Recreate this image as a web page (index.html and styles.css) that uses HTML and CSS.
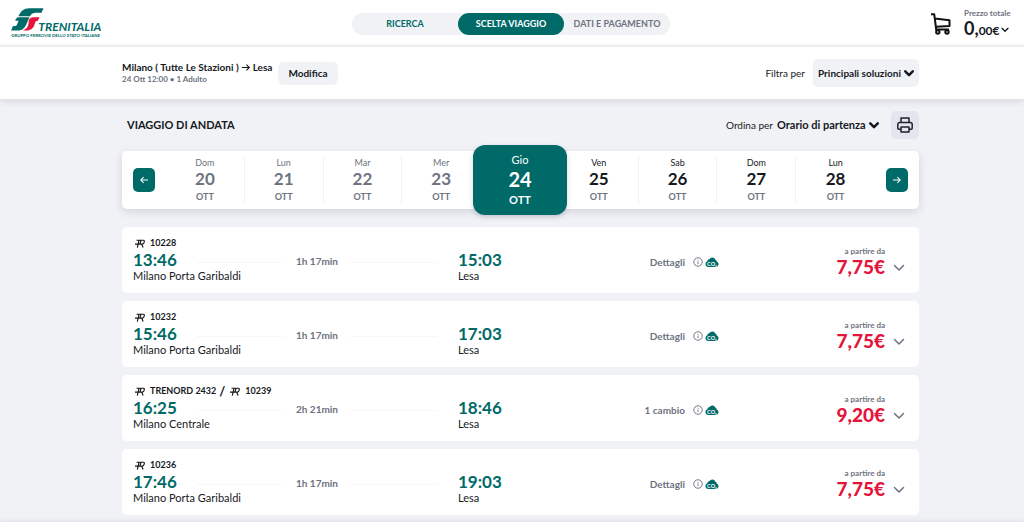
FILE: index.html
```html
<!DOCTYPE html>
<html lang="it">
<head>
<meta charset="utf-8">
<meta name="viewport" content="width=device-width, initial-scale=1">
<title>Trenitalia - Scelta viaggio</title>
<link rel="stylesheet" href="styles.css">
</head>
<body>
<svg class="defs" aria-hidden="true">
  <symbol id="regional" viewBox="0 0 26 22"><path d="M4 2.500H22Q25 2.500 24 7T20 12.500H0M10.500 2.500L6 22M17.500 12.500l3.500 9M15.500 2.500L13 12" fill="none" stroke="currentColor" stroke-width="3"/></symbol>
  <symbol id="chevron" viewBox="0 0 12 8"><path d="M1.500 1.500L6 6l4.500-4.500" fill="none" stroke="currentColor" stroke-linecap="round" stroke-linejoin="round"/></symbol>
  <symbol id="info" viewBox="0 0 20 20"><circle cx="10" cy="10" r="8.500" fill="none" stroke="currentColor" stroke-width="1.900"/><path d="M10 9v5.500M10 5.500v2" stroke="currentColor" stroke-width="1.800"/></symbol>
  <symbol id="co2" viewBox="0 0 28 20"><path d="M6 20a6 6 0 0 1-1.500-11.500A5 5 0 0 1 9 4a6.500 6.500 0 0 1 11.500 1A4.500 4.500 0 0 1 23.500 9 5.700 5.700 0 0 1 22 20z" fill="#006a68"/><text x="14" y="17" text-anchor="middle" class="co2-text">CO₂</text></symbol>
</svg>

<header class="topbar">
  <a class="logo" href="#" aria-label="Trenitalia">
    <svg viewBox="0 0 270 93" width="90" height="31">
      <g transform="scale(1.5)">
        <path d="M15 16.400C20 6 26 .6 36 .6H65L61 9.600H50C43 9.600 40 12 38 16.400z" fill="#006a68"/>
        <path d="M14 18.400H37L31 32C27 41 22 45 14 45H0L4 36H8C10 36 11.200 35 12 33L15.200 25.600H8.400C9.600 21.600 11.200 19.400 14 18.400z" fill="#006a68"/>
        <path d="M57 18.400H45C39.200 18.400 36.600 21 35.600 25L35.200 30C34.400 38 30 43.600 22 45H31C40 45 45 40 47 33C48.600 27.600 49 25.600 54 25.600z" fill="#e4153a"/>
      </g>
      <text x="82" y="68" class="logo-name">TRENITALIA</text>
      <text x="1" y="87" class="logo-group">GRUPPO FERROVIE DELLO STATO ITALIANE</text>
    </svg>
  </a>
  <nav class="steps" aria-label="Fasi">
    <a href="#" class="step step-done">RICERCA</a>
    <a href="#" class="step step-current" aria-current="step">SCELTA VIAGGIO</a>
    <span class="step">DATI E PAGAMENTO</span>
  </nav>
  <div class="cart">
    <svg class="cart-icon" viewBox="0 0 20 22" fill="none" stroke="#111" stroke-width="2" stroke-linejoin="round"><path d="M0 1.200h3.200l2 15.300H18M3.700 5.500L18.500 7.300V13L4.900 13.800"/><circle cx="6.800" cy="19" r="1.700"/><circle cx="16" cy="19" r="1.700"/></svg>
    <button class="total" type="button">
      <span class="total-label">Prezzo totale</span>
      <span class="total-value"><span class="total-int">0,</span>00€<svg class="chev-small"><use href="#chevron"/></svg></span>
    </button>
  </div>
</header>

<section class="summary">
  <div class="route">
    <div class="route-name">Milano ( Tutte Le Stazioni ) <svg class="route-arrow" viewBox="0 0 12 10"><path d="M1 5h9M6.500 1.500L10 5 6.500 8.500" fill="none" stroke="currentColor" stroke-width="1.300"/></svg> Lesa</div>
    <div class="route-info">24 Ott 12:00 • 1 Adulto</div>
  </div>
  <button class="edit" type="button">Modifica</button>
  <div class="filter">
    <label for="filter">Filtra per</label>
    <div class="picker picker-box">
      <select id="filter"><option>Principali soluzioni</option></select>
      <svg class="chev-bold"><use href="#chevron"/></svg>
    </div>
  </div>
</section>

<main class="results">
  <div class="toolbar">
    <h1>VIAGGIO DI ANDATA</h1>
    <div class="sort">
      <label for="sort">Ordina per</label>
      <div class="picker picker-plain">
        <select id="sort"><option>Orario di partenza</option></select>
        <svg class="chev-bold"><use href="#chevron"/></svg>
      </div>
    </div>
    <button class="print" type="button" aria-label="Stampa">
      <svg viewBox="0 0 16 16" width="16" height="16" fill="none" stroke="#1f2329" stroke-width="1.500" stroke-linejoin="round"><path d="M4 5.500V1h8v4.500M4 12.200H1.800a1 1 0 0 1-1-1V7.500a2 2 0 0 1 2-2h10.400a2 2 0 0 1 2 2v3.700a1 1 0 0 1-1 1H12M4 10h8v5H4z"/></svg>
    </button>
  </div>

  <div class="dates">
    <button class="nav" type="button" aria-label="Giorni precedenti"><svg viewBox="0 0 12 10"><path d="M11 5H2M5.500 1.500L2 5l3.500 3.500" fill="none" stroke="#fff" stroke-width="1.300"/></svg></button>
    <div class="days">
      <button type="button" class="day day-past"><span class="dow">Dom</span><b>20</b><span class="month">OTT</span></button>
      <button type="button" class="day day-past"><span class="dow">Lun</span><b>21</b><span class="month">OTT</span></button>
      <button type="button" class="day day-past"><span class="dow">Mar</span><b>22</b><span class="month">OTT</span></button>
      <button type="button" class="day day-past"><span class="dow">Mer</span><b>23</b><span class="month">OTT</span></button>
      <button type="button" class="day day-selected" aria-pressed="true"><span class="dow">Gio</span><b>24</b><span class="month">OTT</span></button>
      <button type="button" class="day"><span class="dow">Ven</span><b>25</b><span class="month">OTT</span></button>
      <button type="button" class="day"><span class="dow">Sab</span><b>26</b><span class="month">OTT</span></button>
      <button type="button" class="day"><span class="dow">Dom</span><b>27</b><span class="month">OTT</span></button>
      <button type="button" class="day"><span class="dow">Lun</span><b>28</b><span class="month">OTT</span></button>
    </div>
    <button class="nav" type="button" aria-label="Giorni successivi"><svg viewBox="0 0 12 10"><path d="M1 5h9M6.500 1.500L10 5 6.500 8.500" fill="none" stroke="#fff" stroke-width="1.300"/></svg></button>
  </div>

  <div class="trips">
    <article class="trip">
      <div class="trains"><svg class="reg"><use href="#regional"/></svg>10228</div>
      <div class="stop"><time>13:46</time><span>Milano Porta Garibaldi</span></div>
      <div class="duration">1h 17min</div>
      <div class="stop"><time>15:03</time><span>Lesa</span></div>
      <button class="details" type="button">Dettagli<svg class="info"><use href="#info"/></svg><svg class="co2"><use href="#co2"/></svg></button>
      <div class="price"><span>a partire da</span><strong>7,75€</strong></div>
      <button class="expand" type="button" aria-label="Espandi"><svg><use href="#chevron"/></svg></button>
    </article>
    <article class="trip">
      <div class="trains"><svg class="reg"><use href="#regional"/></svg>10232</div>
      <div class="stop"><time>15:46</time><span>Milano Porta Garibaldi</span></div>
      <div class="duration">1h 17min</div>
      <div class="stop"><time>17:03</time><span>Lesa</span></div>
      <button class="details" type="button">Dettagli<svg class="info"><use href="#info"/></svg><svg class="co2"><use href="#co2"/></svg></button>
      <div class="price"><span>a partire da</span><strong>7,75€</strong></div>
      <button class="expand" type="button" aria-label="Espandi"><svg><use href="#chevron"/></svg></button>
    </article>
    <article class="trip">
      <div class="trains"><svg class="reg"><use href="#regional"/></svg>TRENORD 2432<span class="slash">/</span><svg class="reg"><use href="#regional"/></svg>10239</div>
      <div class="stop"><time>16:25</time><span>Milano Centrale</span></div>
      <div class="duration">2h 21min</div>
      <div class="stop"><time>18:46</time><span>Lesa</span></div>
      <button class="details" type="button">1 cambio<svg class="info"><use href="#info"/></svg><svg class="co2"><use href="#co2"/></svg></button>
      <div class="price"><span>a partire da</span><strong>9,20€</strong></div>
      <button class="expand" type="button" aria-label="Espandi"><svg><use href="#chevron"/></svg></button>
    </article>
    <article class="trip">
      <div class="trains"><svg class="reg"><use href="#regional"/></svg>10236</div>
      <div class="stop"><time>17:46</time><span>Milano Porta Garibaldi</span></div>
      <div class="duration">1h 17min</div>
      <div class="stop"><time>19:03</time><span>Lesa</span></div>
      <button class="details" type="button">Dettagli<svg class="info"><use href="#info"/></svg><svg class="co2"><use href="#co2"/></svg></button>
      <div class="price"><span>a partire da</span><strong>7,75€</strong></div>
      <button class="expand" type="button" aria-label="Espandi"><svg><use href="#chevron"/></svg></button>
    </article>
  </div>
</main>
<footer class="bottom"></footer>
</body>
</html>
```
FILE: styles.css
```css
* { box-sizing: border-box; }
body {
  display: flex;
  flex-direction: column;
  min-height: 100vh;
  margin: 0;
  background: #f1f2f6;
  color: #16191d;
  font-family: Lato, sans-serif;
  font-size: 11px;
  line-height: 14px;
}
button, select {
  font: inherit;
  color: inherit;
  border: 0;
  padding: 0;
  margin: 0;
  background: none;
}
a { color: inherit; text-decoration: none; }
svg { display: block; flex: none; }
.defs { position: absolute; width: 0; height: 0; }

.topbar {
  display: grid;
  grid-template-columns: 1fr 318px 1fr;
  align-items: center;
  height: 47px;
  padding: 2px 12px 0 10px;
  background: #fff;
  border-bottom: 2px solid #f4f4f5;
}
.logo { justify-self: start; margin-left: 1px; }
.logo-name { font: italic 700 36px Lato, sans-serif; fill: #006a68; }
.logo-group { font: 700 13px Lato, sans-serif; fill: #006a68; }
.steps {
  display: grid;
  grid-template-columns: repeat(3, 1fr);
  height: 22px;
  border-radius: 11px;
  background: #f1f2f6;
  color: #6d7380;
  font-size: 9px;
  font-weight: 700;
  line-height: 22px;
  text-align: center;
}
.step-done { color: #006a68; }
.step-current { border-radius: 11px; background: #006a68; color: #fff; }
.cart { display: flex; align-items: center; justify-self: end; gap: 13px; }
.cart-icon { width: 20px; height: 22px; }
.total { min-width: 48px; text-align: left; }
.total-label { display: block; color: #6d7380; font-size: 8px; font-weight: 700; line-height: 12px; }
.total-value { display: flex; align-items: baseline; font-size: 12px; font-weight: 700; line-height: 18px; }
.total-int { font-size: 18px; }
.chev-small { align-self: center; width: 8px; height: 6px; margin-left: 1px; stroke-width: 2; }

.summary {
  position: relative;
  display: flex;
  align-items: center;
  height: 52px;
  padding: 0 105px 0 122px;
  background: #fff;
  box-shadow: 0 2px 8px rgba(40, 40, 70, .14);
}
.route-name { display: flex; align-items: center; gap: 2px; font-size: 10px; font-weight: 700; line-height: 12px; }
.route-arrow { width: 10px; height: 9px; }
.route-info { color: #6d7380; font-size: 8px; font-weight: 700; line-height: 12px; }
.edit {
  height: 23px;
  margin-left: 6px;
  padding: 0 10px;
  border-radius: 5px;
  background: #f1f2f6;
  font-size: 10px;
  font-weight: 700;
}
.filter { display: flex; align-items: center; gap: 8px; margin-left: auto; font-size: 10px; }
.picker { display: flex; align-items: center; gap: 3px; font-weight: 700; }
.picker select { appearance: none; }
.picker-box { height: 28px; padding: 0 5px; border-radius: 5px; background: #f1f2f6; }
.picker-plain { font-size: 11px; }
.chev-bold { width: 10px; height: 7px; stroke-width: 3; }

.results { padding: 12px 105px 7px 122px; }
.toolbar { display: flex; align-items: center; height: 28px; padding-left: 5px; }
h1 { margin: 0; font-size: 11px; font-weight: 700; }
.sort { display: flex; align-items: center; gap: 4px; margin-left: auto; font-size: 10px; }
.print {
  display: grid;
  place-items: center;
  width: 28px;
  height: 28px;
  margin-left: 12px;
  border-radius: 5px;
  background: #e3e6ee;
}

.dates {
  display: flex;
  align-items: center;
  gap: 11px;
  height: 58px;
  margin-top: 12px;
  padding: 0 11px;
  border-radius: 5px;
  background: #fff;
  box-shadow: 0 3px 9px rgba(40, 40, 70, .14);
}
.nav { display: grid; place-items: center; width: 22px; height: 24px; border-radius: 5px; background: #006a68; }
.nav svg { width: 10px; height: 8px; }
.days { display: grid; grid-template-columns: repeat(9, 1fr); flex: 1; align-self: stretch; }
.day {
  display: flex;
  flex-direction: column;
  align-items: center;
  justify-content: center;
  margin: 5px 0;
  border-right: 1px solid #f1f2f5;
  font-size: 9px;
  line-height: 13px;
}
.day:last-child { border-right: 0; }
.day b { font-size: 17px; line-height: 20px; }
.month { color: #6d7380; font-size: 9px; font-weight: 700; line-height: 15px; }
.day-past { color: #6d7380; }
.day-selected {
  margin: -6px -7px -6px -8px;
  border: 0;
  border-radius: 12px;
  background: #006a68;
  color: #fff;
  box-shadow: 0 2px 5px rgba(40, 40, 70, .2);
  font-size: 11px;
  line-height: 16px;
  z-index: 1;
}
.day-selected b { font-size: 20px; line-height: 22px; }
.day-selected .month { color: #fff; font-size: 11px; line-height: 19px; }

.trips { display: grid; gap: 8px; margin-top: 18px; }
.trip {
  display: grid;
  grid-template-columns: 64px 261px minmax(64px, 1fr) auto 166px 34px;
  grid-template-rows: 16px 34px;
  height: 66px;
  padding: 8px 0 8px 11px;
  border-radius: 5px;
  background: #fff;
}
.trains { grid-column: 1 / 4; display: flex; align-items: center; font-size: 9px; font-weight: 700; }
.reg { width: 10px; height: 9px; margin: 0 5px 0 2px; }
.slash { margin: 0 3px; font-size: 13px; }
.stop { grid-row: 2; }
.stop time { display: block; color: #006a68; font-size: 17px; font-weight: 700; line-height: 18px; }
.stop span { display: block; line-height: 14px; white-space: nowrap; }
.duration {
  grid-row: 2;
  display: flex;
  gap: 12px;
  height: 20px;
  padding-right: 21px;
  color: #6d7380;
  font-size: 10px;
  font-weight: 700;
  line-height: 20px;
}
.duration::before, .duration::after {
  content: "";
  flex: 1;
  height: 11px;
  border-bottom: 1px dotted #f0f1f4;
}
.details {
  grid-row: 2;
  display: flex;
  align-items: center;
  height: 21px;
  color: #6d7380;
  font-size: 10px;
  font-weight: 700;
}
.info { width: 10px; height: 10px; margin: 0 2px 0 8px; }
.co2 { width: 14px; height: 10px; }
.co2-text { font: 700 11px Lato, sans-serif; fill: #fff; }
.price { grid-row: 1 / 3; padding-top: 10px; text-align: right; }
.price span { display: block; color: #6d7380; font-size: 8px; font-weight: 700; line-height: 12px; }
.price strong { display: block; color: #e4153a; font-size: 19px; font-weight: 900; line-height: 20px; }
.expand { grid-row: 1 / 3; display: grid; place-items: center start; padding: 16px 0 0 8px; color: #6d7380; }
.expand svg { width: 12px; height: 8px; stroke-width: 1.500; }

.bottom { flex: 1; min-height: 5px; background: #fff; box-shadow: 0 -1px 4px rgba(40, 40, 70, .1); }
```
